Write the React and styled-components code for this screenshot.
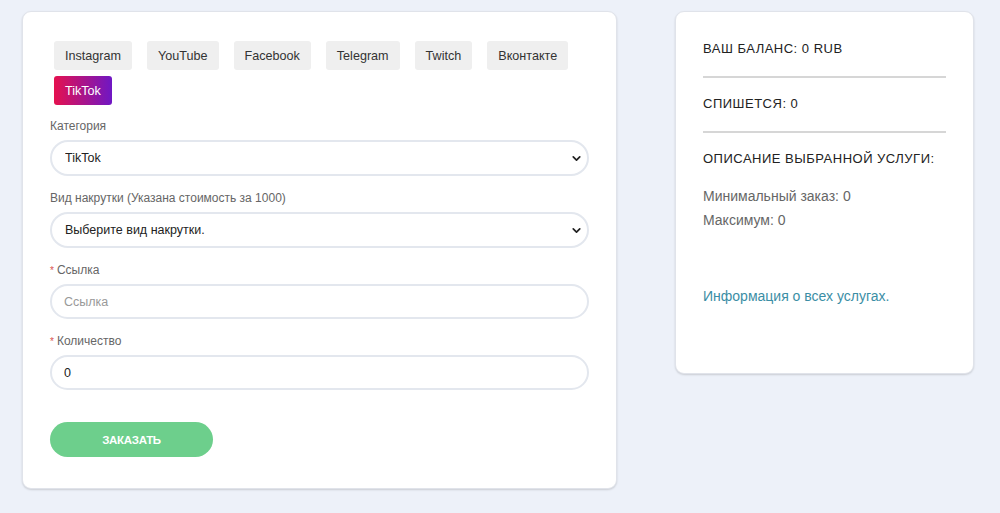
import React, { useState } from "react";
import styled, { createGlobalStyle } from "styled-components";
import { ChevronDown } from "lucide-react";

const GlobalStyle = createGlobalStyle`
  html, body {
    margin: 0;
    padding: 0;
    background: #edf1f9;
    font-family: "Liberation Sans", Arial, sans-serif;
  }
`;

const Page = styled.div`
  display: flex;
  align-items: flex-start;
  gap: 58px;
  padding: 11px 0 0 22px;
  min-height: 502px;
`;

const Card = styled.div`
  background: #fff;
  border: 1px solid #e0e3ea;
  border-radius: 9px;
  box-shadow: 0 1px 2px rgba(0, 0, 0, 0.15);
  box-sizing: border-box;
`;

const OrderCard = styled(Card)`
  width: 595px;
  padding: 29px 27px 31px;
`;

const InfoCard = styled(Card)`
  width: 299px;
  padding: 29px 27px 65px 27px;
`;

const Tabs = styled.div`
  display: flex;
  flex-wrap: wrap;
  column-gap: 15px;
  row-gap: 6px;
  padding-left: 4px;
  width: 530px;
`;

const Tab = styled.button`
  height: 29px;
  padding: 0 11px;
  border: none;
  border-radius: 3px;
  font-family: inherit;
  font-size: 12.6px;
  color: ${(p) => (p.$active ? "#fff" : "#333")};
  background: ${(p) =>
    p.$active ? "linear-gradient(90deg, #e5114f 0%, #6f17c4 100%)" : "#efefef"};
  cursor: pointer;
`;

const Field = styled.div`
  margin-top: ${(p) => p.$top || 15}px;
`;

const Label = styled.div`
  font-size: 12px;
  line-height: 14px;
  color: #666;
  margin-bottom: 7px;
`;

const Star = styled.span`
  color: #d9534f;
  font-size: 10px;
  line-height: 10px;
  margin-right: 3px;
`;

const SelectWrap = styled.div`
  position: relative;
`;

const Select = styled.select`
  display: block;
  width: 100%;
  height: 36px;
  appearance: none;
  border: 2px solid #e3e7ee;
  border-radius: 18px;
  padding: 0 30px 0 13px;
  background: #fff;
  font-family: inherit;
  font-size: 12.5px;
  color: #222;
  outline: none;
`;

const Arrow = styled(ChevronDown)`
  position: absolute;
  right: 6px;
  top: 12px;
  color: #222;
  pointer-events: none;
`;

const Input = styled.input`
  display: block;
  width: 100%;
  height: 35px;
  box-sizing: border-box;
  border: 2px solid #e3e7ee;
  border-radius: 18px;
  padding: 0 12px;
  font-family: inherit;
  font-size: 12.5px;
  color: #222;
  outline: none;

  &::placeholder {
    color: #999;
  }
`;

const Submit = styled.button`
  display: block;
  margin-top: 32px;
  width: 163px;
  height: 35px;
  border: none;
  border-radius: 18px;
  background: #6dcf8c;
  color: #fff;
  font-family: inherit;
  font-size: 11.5px;
  font-weight: bold;
  letter-spacing: -0.3px;
  text-transform: uppercase;
  cursor: pointer;
`;

const Heading = styled.div`
  font-size: 13px;
  line-height: 16px;
  letter-spacing: 0.5px;
  color: #222;
  text-transform: uppercase;
`;

const Divider = styled.hr`
  border: none;
  height: 2px;
  background: #d6d6d6;
  margin: 19px 0 18px;
`;

const Meta = styled.div`
  margin-top: ${(p) => p.$top || 0}px;
  font-size: 14px;
  line-height: 24px;
  color: #666;
`;

const InfoLink = styled.a`
  display: block;
  margin-top: 52px;
  font-size: 14px;
  line-height: 24px;
  color: #3b8ea5;
  text-decoration: none;
`;

const networks = ["Instagram", "YouTube", "Facebook", "Telegram", "Twitch", "Вконтакте", "TikTok"];

export default function App() {
  const [active, setActive] = useState("TikTok");
  const [qty, setQty] = useState("0");

  return (
    <>
      <GlobalStyle />
      <Page>
        <OrderCard>
          <Tabs>
            {networks.map((n) => (
              <Tab key={n} $active={n === active} onClick={() => setActive(n)}>
                {n}
              </Tab>
            ))}
          </Tabs>

          <Field $top={14}>
            <Label>Категория</Label>
            <SelectWrap>
              <Select value={active} onChange={(e) => setActive(e.target.value)}>
                {networks.map((n) => (
                  <option key={n}>{n}</option>
                ))}
              </Select>
              <Arrow size={13} strokeWidth={3.2} />
            </SelectWrap>
          </Field>

          <Field>
            <Label>Вид накрутки (Указана стоимость за 1000)</Label>
            <SelectWrap>
              <Select defaultValue="">
                <option value="">Выберите вид накрутки.</option>
              </Select>
              <Arrow size={13} strokeWidth={3.2} />
            </SelectWrap>
          </Field>

          <Field>
            <Label>
              <Star>*</Star>Ссылка
            </Label>
            <Input placeholder="Ссылка" />
          </Field>

          <Field>
            <Label>
              <Star>*</Star>Количество
            </Label>
            <Input value={qty} onChange={(e) => setQty(e.target.value)} />
          </Field>

          <Submit>Заказать</Submit>
        </OrderCard>

        <InfoCard>
          <Heading>Ваш баланс: 0 RUB</Heading>
          <Divider />
          <Heading>Спишется: 0</Heading>
          <Divider />
          <Heading>Описание выбранной услуги:</Heading>
          <Meta $top={17}>Минимальный заказ: 0</Meta>
          <Meta>Максимум: 0</Meta>
          <InfoLink href="#">Информация о всех услугах.</InfoLink>
        </InfoCard>
      </Page>
    </>
  );
}
